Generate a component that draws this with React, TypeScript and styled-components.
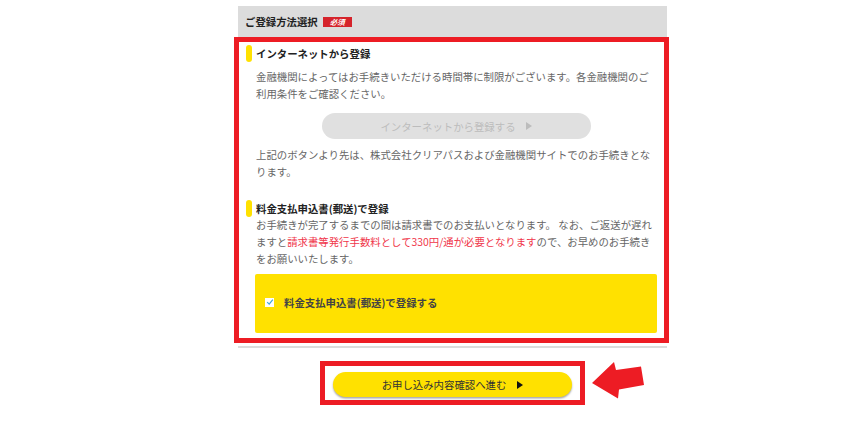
import React from "react";
import styled, { createGlobalStyle } from "styled-components";

const Global = createGlobalStyle`
  html, body { margin: 0; padding: 0; background: #fff; }
  body { font-family: "Noto Sans CJK JP", "Noto Sans", sans-serif; }
  * { box-sizing: border-box; }
`;

const Page = styled.div`
  width: 847px;
  height: 425px;
  padding: 6px 0 0 238px;
  overflow: hidden;
`;

const Card = styled.section`
  width: 429px;
  background: #fff;
  border-bottom: 2px solid #dcdcdc;
`;

const CardHeader = styled.header`
  height: 31px;
  background: #dcdcdc;
  display: flex;
  align-items: center;
  gap: 5px;
  padding-left: 7px;
  font-size: 10.4px;
  font-weight: 700;
  color: #222;
`;

const Badge = styled.span`
  display: inline-flex;
  align-items: center;
  justify-content: center;
  width: 29px;
  height: 10px;
  background: #d5232b;
  color: #fff;
  font-size: 7.5px;
  font-weight: 700;
  font-style: italic;
  line-height: 1;
`;

const Body = styled.div`
  margin: 0 -2px 3px -4px;
  border: 5px solid #ed1c24;
  padding: 3px 7px 5px 7px;
`;

const SectionTitle = styled.h3<{ $mt?: number }>`
  margin: ${(p) => p.$mt ?? 0}px 0 0 0;
  height: 17px;
  display: flex;
  align-items: center;
  gap: 4px;
  font-size: 10.4px;
  font-weight: 700;
  color: #222;
  &::before {
    content: "";
    width: 6px;
    height: 17px;
    border-radius: 3px;
    background: #ffe100;
  }
`;

const SectionContent = styled.div`
  padding-left: 9px;
`;

const Para = styled.p<{ $mt?: number }>`
  margin: ${(p) => p.$mt ?? 0}px 0 0 1px;
  font-size: 10.4px;
  line-height: 17px;
  color: #666;
  white-space: nowrap;
`;

const Em = styled.span`
  color: #f0364a;
`;

const Triangle = styled.span<{ $color: string }>`
  width: 0;
  height: 0;
  border-left: 6px solid ${(p) => p.$color};
  border-top: 4px solid transparent;
  border-bottom: 4px solid transparent;
`;

const DisabledButton = styled.button`
  display: flex;
  align-items: center;
  justify-content: center;
  gap: 10px;
  width: 269px;
  height: 26px;
  margin: 11px auto 0;
  border: none;
  border-radius: 13px;
  background: #e0e0e0;
  color: #bcbcbc;
  font-family: inherit;
  font-size: 10.4px;
  padding: 0;
`;

const ConsentBox = styled.label`
  display: flex;
  align-items: center;
  gap: 10px;
  height: 59px;
  margin-top: 7px;
  padding: 0 0 3px 10px;
  background: #ffe100;
  border-radius: 2px;
  font-size: 10.4px;
  font-weight: 700;
  color: #444;
`;

const CheckSquare = styled.span`
  display: inline-flex;
  align-items: center;
  justify-content: center;
  width: 9px;
  height: 9px;
  background: #fff;
`;

const BottomRow = styled.div`
  display: flex;
  align-items: flex-start;
  gap: 6px;
  margin: 13px 0 0 82px;
`;

const ButtonFrame = styled.div`
  border: 5px solid #ed1c24;
  padding: 6px 8px 3px 8px;
`;

const NextButton = styled.button`
  display: flex;
  align-items: center;
  justify-content: center;
  gap: 11px;
  width: 239px;
  height: 25px;
  border: none;
  border-radius: 13px;
  background: #ffe100;
  box-shadow: 0 1.5px 2px rgba(0, 0, 0, 0.35);
  color: #333;
  font-family: inherit;
  font-size: 10.4px;
  padding: 0;
`;

const ArrowSvg = styled.svg`
  margin-top: 1px;
  display: block;
`;

export default function App() {
  return (
    <>
      <Global />
      <Page>
        <Card>
          <CardHeader>
            ご登録方法選択<Badge>必須</Badge>
          </CardHeader>
          <Body>
            <SectionTitle>インターネットから登録</SectionTitle>
            <SectionContent>
              <Para $mt={6}>
                金融機関によってはお手続きいただける時間帯に制限がございます。各金融機関のご
                <br />
                利用条件をご確認ください。
              </Para>
              <DisabledButton type="button">
                インターネットから登録する
                <Triangle $color="#bcbcbc" />
              </DisabledButton>
              <Para $mt={7}>
                上記のボタンより先は、株式会社クリアパスおよび金融機関サイトでのお手続きとな
                <br />
                ります。
              </Para>
            </SectionContent>
            <SectionTitle $mt={20}>料金支払申込書(郵送)で登録</SectionTitle>
            <SectionContent>
              <Para $mt={-1}>
                お手続きが完了するまでの間は請求書でのお支払いとなります。 なお、ご返送が遅れ
                <br />
                ますと<Em>請求書等発行手数料として330円/通が必要となります</Em>ので、お早めのお手続き
                <br />
                をお願いいたします。
              </Para>
              <ConsentBox>
                <CheckSquare>
                  <svg width="8" height="8" viewBox="0 0 8 8">
                    <path d="M1.2 4.2 L3.2 6.2 L6.8 1.6" fill="none" stroke="#3fa7d6" strokeWidth="1.2" />
                  </svg>
                </CheckSquare>
                料金支払申込書(郵送)で登録する
              </ConsentBox>
            </SectionContent>
          </Body>
        </Card>
        <BottomRow>
          <ButtonFrame>
            <NextButton type="button">
              お申し込み内容確認へ進む
              <Triangle $color="#111" />
            </NextButton>
          </ButtonFrame>
          <ArrowSvg width="53" height="37" viewBox="0 0 53 37">
            <polygon points="1,21 23,0 25,8 50,4.5 53,23 28,27.5 27,36.5" fill="#ed1c24" />
          </ArrowSvg>
        </BottomRow>
      </Page>
    </>
  );
}
